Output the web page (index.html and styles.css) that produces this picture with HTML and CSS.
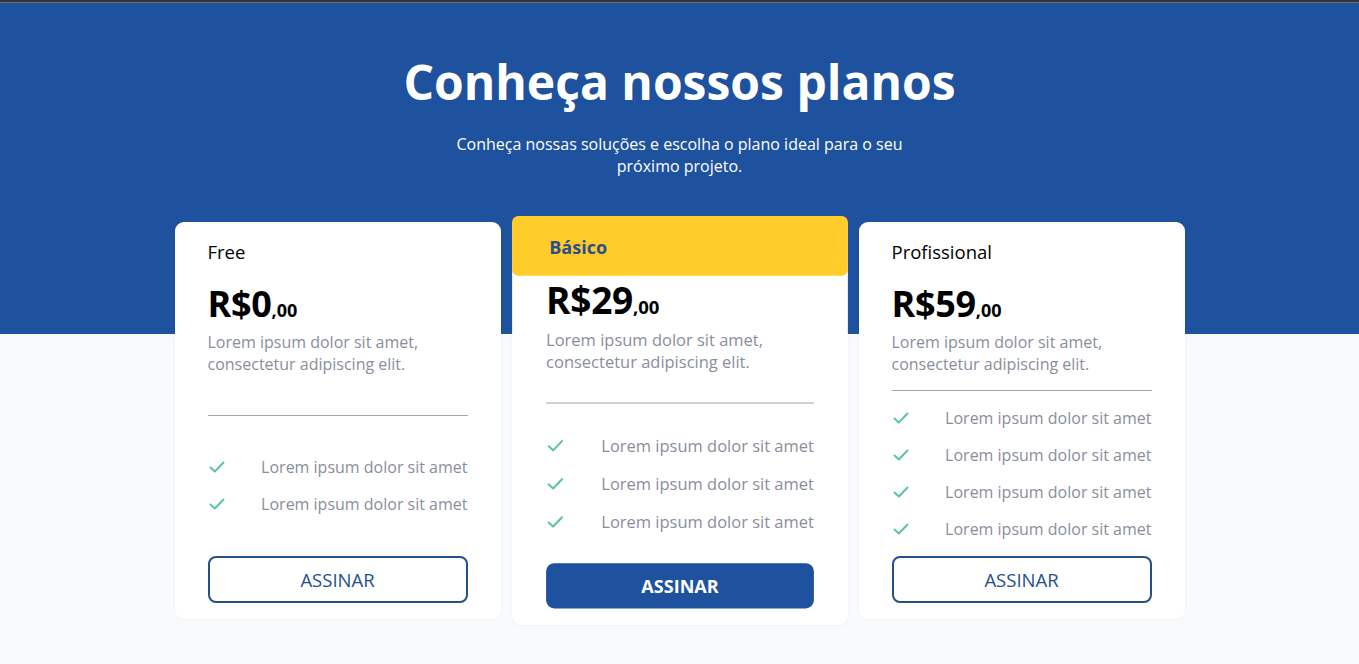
FILE: index.html
```html
<!DOCTYPE html>
<html lang="pt-BR">
<head>
<meta charset="utf-8">
<title>Planos</title>
<link rel="stylesheet" href="styles.css">
</head>
<body>
<div class="topbar"></div>
<section class="hero">
  <h1 class="hero-title">Conheça nossos planos</h1>
  <p class="hero-sub">Conheça nossas soluções e escolha o plano ideal para o seu próximo projeto.</p>
</section>
<section class="plans">
  <div class="card">
    <div class="card-top">
      <h2 class="plan-name">Free</h2>
      <div class="price"><span class="price-main">R$0</span><span class="price-cents">,00</span></div>
      <p class="desc">Lorem ipsum dolor sit amet, consectetur adipiscing elit.</p>
    </div>
    <hr class="divider">
    <ul class="features">
      <li><svg class="check" viewBox="0 0 16 12"><path d="M1.5 6.5 L5.8 10.5 L14.5 1.5"/></svg><span>Lorem ipsum dolor sit amet</span></li>
      <li><svg class="check" viewBox="0 0 16 12"><path d="M1.5 6.5 L5.8 10.5 L14.5 1.5"/></svg><span>Lorem ipsum dolor sit amet</span></li>
    </ul>
    <button class="btn btn-outline">ASSINAR</button>
  </div>
  <div class="card card-featured">
    <div class="card-top">
      <h2 class="plan-name plan-name-featured">Básico</h2>
      <div class="price"><span class="price-main">R$29</span><span class="price-cents">,00</span></div>
      <p class="desc">Lorem ipsum dolor sit amet, consectetur adipiscing elit.</p>
    </div>
    <hr class="divider">
    <ul class="features">
      <li><svg class="check" viewBox="0 0 16 12"><path d="M1.5 6.5 L5.8 10.5 L14.5 1.5"/></svg><span>Lorem ipsum dolor sit amet</span></li>
      <li><svg class="check" viewBox="0 0 16 12"><path d="M1.5 6.5 L5.8 10.5 L14.5 1.5"/></svg><span>Lorem ipsum dolor sit amet</span></li>
      <li><svg class="check" viewBox="0 0 16 12"><path d="M1.5 6.5 L5.8 10.5 L14.5 1.5"/></svg><span>Lorem ipsum dolor sit amet</span></li>
    </ul>
    <button class="btn btn-filled">ASSINAR</button>
  </div>
  <div class="card">
    <div class="card-top">
      <h2 class="plan-name">Profissional</h2>
      <div class="price"><span class="price-main">R$59</span><span class="price-cents">,00</span></div>
      <p class="desc">Lorem ipsum dolor sit amet, consectetur adipiscing elit.</p>
    </div>
    <hr class="divider">
    <ul class="features">
      <li><svg class="check" viewBox="0 0 16 12"><path d="M1.5 6.5 L5.8 10.5 L14.5 1.5"/></svg><span>Lorem ipsum dolor sit amet</span></li>
      <li><svg class="check" viewBox="0 0 16 12"><path d="M1.5 6.5 L5.8 10.5 L14.5 1.5"/></svg><span>Lorem ipsum dolor sit amet</span></li>
      <li><svg class="check" viewBox="0 0 16 12"><path d="M1.5 6.5 L5.8 10.5 L14.5 1.5"/></svg><span>Lorem ipsum dolor sit amet</span></li>
      <li><svg class="check" viewBox="0 0 16 12"><path d="M1.5 6.5 L5.8 10.5 L14.5 1.5"/></svg><span>Lorem ipsum dolor sit amet</span></li>
    </ul>
    <button class="btn btn-outline">ASSINAR</button>
  </div>
</section>
</body>
</html>
```
FILE: styles.css
```css
* { box-sizing: border-box; }
html, body {
  margin: 0;
  padding: 0;
}
body {
  font-family: "Open Sans", "Noto Sans", sans-serif;
  background: #f8fafc;
  height: 664px;
  overflow: hidden;
}
.topbar {
  height: 3px;
  background: #35363a;
  border-bottom: 1px solid #6b7280;
}
.hero {
  background: #1e529e;
  height: 331px;
  padding-top: 47px;
  text-align: center;
  color: #fff;
}
.hero-title {
  margin: 0;
  font-size: 48px;
  font-weight: 700;
  line-height: 64px;
}
.hero-sub {
  margin: 19px auto 0;
  max-width: 470px;
  font-size: 16px;
  line-height: 22px;
}
.plans {
  display: grid;
  grid-template-columns: repeat(3, 326px);
  column-gap: 16px;
  justify-content: center;
  margin-top: -112px;
  align-items: stretch;
}
.card {
  background: #fff;
  border-radius: 9px;
  padding: 0 33px 16px;
  display: flex;
  flex-direction: column;
  justify-content: space-between;
  box-shadow: 0 1px 3px rgba(30, 60, 110, 0.04);
}
.card-featured {
  transform: scale(1.03);
}
.card-top {
  display: flex;
  flex-direction: column;
}
.plan-name {
  margin: 0;
  height: 58px;
  display: flex;
  align-items: center;
  font-size: 18.5px;
  font-weight: 500;
  color: #000;
}
.plan-name-featured {
  margin: 0 -33px;
  padding: 1px 36px 0;
  background: #ffcc29;
  border-radius: 6px;
  color: #2c4f8a;
  font-weight: 700;
  font-size: 17.5px;
}
.price {
  margin-top: 4px;
  line-height: 40px;
  color: #000;
  font-weight: 700;
}
.price-main {
  font-size: 36px;
  letter-spacing: -0.3px;
}
.price-cents {
  font-size: 18px;
}
.desc {
  margin: 0;
  font-size: 16px;
  line-height: 22px;
  color: #8a8e9c;
}
.divider {
  margin: 15px 0 0;
  border: 0;
  border-top: 1px solid #a4a6ab;
  height: 0;
}
.features {
  list-style: none;
  margin: 15px 0 0;
  padding: 0;
  display: flex;
  flex-direction: column;
  gap: 13px;
}
.features li {
  display: flex;
  justify-content: space-between;
  align-items: center;
  font-size: 16px;
  line-height: 24px;
  color: #8a8e9c;
}
.check {
  width: 16px;
  height: 12px;
  margin-left: 1px;
  fill: none;
  stroke: #5cc59a;
  stroke-width: 2;
  stroke-linecap: round;
  stroke-linejoin: round;
}
.btn {
  margin-top: 15px;
  width: 100%;
  font-family: inherit;
  cursor: pointer;
  border-radius: 8px;
}
.btn-outline {
  height: 47px;
  background: #fff;
  border: 2px solid #24508e;
  color: #24508e;
  font-size: 18.5px;
  font-weight: 500;
}
.btn-filled {
  height: 44px;
  background: #1e529e;
  border: 0;
  color: #fff;
  font-size: 17.5px;
  font-weight: 700;
}
```
